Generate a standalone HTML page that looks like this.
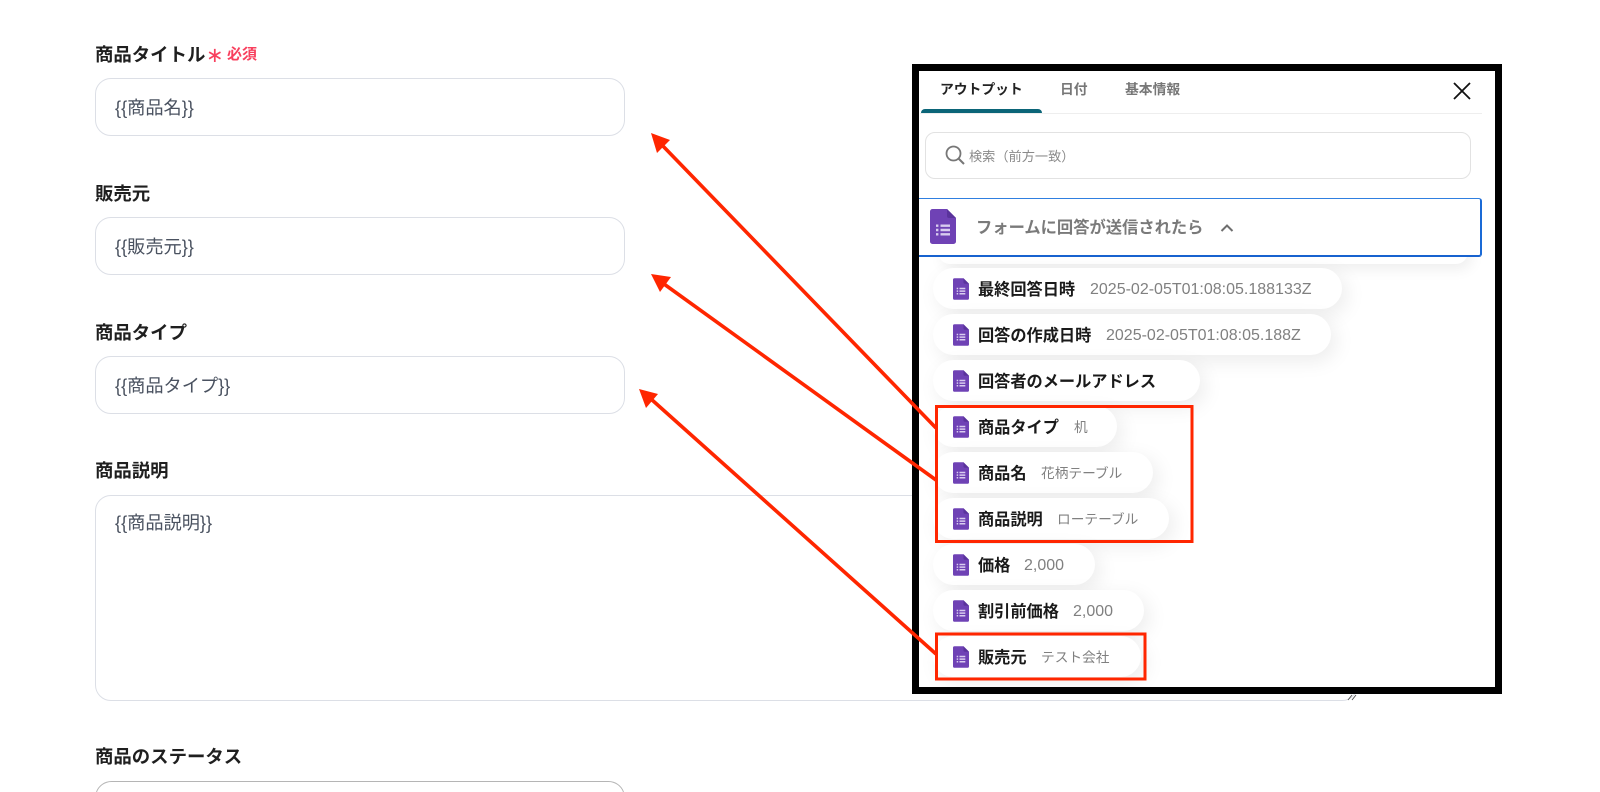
<!DOCTYPE html>
<html lang="ja">
<head>
<meta charset="utf-8">
<title>Form</title>
<style>
html,body{margin:0;padding:0;background:#fff;width:1600px;height:792px;overflow:hidden}
body{position:relative;font-family:"Liberation Sans","Noto Sans CJK JP",sans-serif;color:#1a1a1a}
.a{position:absolute;white-space:nowrap}
.lab{position:absolute;left:95px;font-size:18.4px;font-weight:700;line-height:26px;color:#1f1f1f;white-space:nowrap}
.inp{position:absolute;left:95px;width:530px;box-sizing:border-box;border:1px solid #dcdfe6;border-radius:16px;background:#fff}
.val{position:absolute;left:115px;font-size:18.2px;line-height:24px;color:#4a5260;white-space:nowrap}
.pill{position:absolute;left:933px;height:41px;border-radius:21px;background:#fff;box-shadow:5px 6px 20px rgba(0,0,0,.08)}
.pill svg{position:absolute;left:19.5px;top:9.5px;width:16px;height:22px}
.pill b{position:absolute;left:45px;top:1.500px;line-height:41px;font-size:16.2px;font-weight:700;color:#1a1a1a;white-space:nowrap}
.pill i{position:absolute;top:1px;line-height:41px;font-style:normal;font-size:16px;color:#808080;white-space:nowrap}
.pill i.j{font-size:13.7px}
</style>
</head>
<body>
<svg width="0" height="0" style="position:absolute">
  <defs>
    <symbol id="f" viewBox="0 0 26 35">
      <path d="M2.5 0H17L26 9V32.5A2.5 2.5 0 0 1 23.5 35H2.5A2.5 2.5 0 0 1 0 32.5V2.5A2.5 2.5 0 0 1 2.5 0Z" fill="#6f42b5"/>
      <path d="M17 0L26 9H19A2 2 0 0 1 17 7Z" fill="#5a339c"/>
      <path d="M6 15.5h2.4v2.4H6zM6 19.8h2.4v2.4H6zM6 24.1h2.4v2.4H6zM10.5 15.5H20v2.4h-9.500zM10.500 19.800H20v2.400h-9.500zM10.500 24.100H20v2.400h-9.500z" fill="#d9ccef"/>
    </symbol>
  </defs>
</svg>

<div class="a" style="left:95px;top:41.500px;line-height:26px;font-size:18.4px;font-weight:700;color:#1f1f1f">商品タイトル</div>
<div class="a" style="left:206px;top:44px;line-height:24px;font-size:21px;color:#f8405e">∗</div>
<div class="a" style="left:227px;top:42px;line-height:26px;font-size:15px;font-weight:700;color:#f8405e">必須</div>
<div class="inp" style="top:78px;height:58px"></div>
<div class="val" style="top:96px">{{商品名}}</div>

<div class="lab" style="top:180.500px">販売元</div>
<div class="inp" style="top:217px;height:58px"></div>
<div class="val" style="top:235px">{{販売元}}</div>

<div class="lab" style="top:319.500px">商品タイプ</div>
<div class="inp" style="top:356px;height:58px"></div>
<div class="val" style="top:374px">{{商品タイプ}}</div>

<div class="lab" style="top:458px">商品説明</div>
<div class="inp" style="top:495px;height:206px;width:1263px"></div>
<div class="val" style="top:511px">{{商品説明}}</div>
<svg class="a" style="left:1344px;top:690px" width="16" height="12" viewBox="0 0 16 12"><path d="M4 10L8 5M8 10L12 5" stroke="#555" stroke-width="1" fill="none"/></svg>

<div class="lab" style="top:744px">商品のステータス</div>
<svg class="a" style="left:0;top:770px" width="640" height="22" viewBox="0 770 640 22"><path d="M96.500 792A16 16 0 0 1 111.500 781.500H608.500A16 16 0 0 1 623.500 792" fill="none" stroke="#b5b5b5" stroke-width="1"/></svg>

<!-- panel -->
<div class="a" style="left:912px;top:64px;width:590px;height:630px;box-sizing:border-box;border:7.500px solid #000;background:#fff"></div>
<div class="a" style="left:940px;top:79px;line-height:22px;font-size:13.800px;font-weight:700;color:#222">アウトプット</div>
<div class="a" style="left:1060px;top:79px;line-height:22px;font-size:13.800px;font-weight:700;color:#777">日付</div>
<div class="a" style="left:1125px;top:79px;line-height:22px;font-size:13.800px;font-weight:700;color:#777">基本情報</div>
<div class="a" style="left:920px;top:113px;width:562px;height:1px;background:#eee"></div>
<div class="a" style="left:921px;top:109px;width:121px;height:4px;background:#0b6578;border-radius:4px 4px 0 0"></div>
<svg class="a" style="left:1451px;top:80px" width="22" height="22" viewBox="0 0 22 22"><path d="M3 3L19 19M19 3L3 19" stroke="#111" stroke-width="1.800" fill="none"/></svg>

<div class="a" style="left:925px;top:132px;width:546px;height:47px;box-sizing:border-box;border:1px solid #e2e2e2;border-radius:10px;background:#fff"></div>
<svg class="a" style="left:944px;top:144px" width="22" height="22" viewBox="0 0 22 22"><circle cx="9.500" cy="9.500" r="7" fill="none" stroke="#777" stroke-width="1.800"/><path d="M14.500 14.500L20 20" stroke="#777" stroke-width="2" fill="none"/></svg>
<div class="a" style="left:969px;top:146px;line-height:22px;font-size:13.200px;color:#8a8a8a">検索（前方一致）</div>

<!-- pill hidden behind header -->
<div class="a" style="left:938px;top:240px;width:530px;height:24px;border-radius:14px;background:#fff;box-shadow:4px 5px 14px rgba(0,0,0,.07)"></div>

<div class="pill" style="top:268px;width:409px"><svg><use href="#f"/></svg><b>最終回答日時</b><i style="left:157px">2025-02-05T01:08:05.188133Z</i></div>
<div class="pill" style="top:314px;width:398px"><svg><use href="#f"/></svg><b>回答の作成日時</b><i style="left:173px">2025-02-05T01:08:05.188Z</i></div>
<div class="pill" style="top:360px;width:267px"><svg><use href="#f"/></svg><b>回答者のメールアドレス</b></div>
<div class="pill" style="top:406px;width:184px"><svg><use href="#f"/></svg><b>商品タイプ</b><i class="j" style="left:141px">机</i></div>
<div class="pill" style="top:452px;width:220px"><svg><use href="#f"/></svg><b>商品名</b><i class="j" style="left:108px">花柄テーブル</i></div>
<div class="pill" style="top:498px;width:236px"><svg><use href="#f"/></svg><b>商品説明</b><i class="j" style="left:124px">ローテーブル</i></div>
<div class="pill" style="top:544px;width:162px"><svg><use href="#f"/></svg><b>価格</b><i style="left:91px">2,000</i></div>
<div class="pill" style="top:590px;width:211px"><svg><use href="#f"/></svg><b>割引前価格</b><i style="left:140px">2,000</i></div>
<div class="pill" style="top:636px;width:208px"><svg><use href="#f"/></svg><b>販売元</b><i class="j" style="left:108px">テスト会社</i></div>

<!-- header row -->
<div class="a" style="left:919px;top:198px;width:563px;height:59px;box-sizing:border-box;border:1px solid #2f7fe0;border-left:none;border-right:2px solid #1a6ad6;border-bottom:2.500px solid #1762cf;border-radius:0 3px 3px 0;background:#fff"></div>
<svg class="a" style="left:930px;top:209px" width="26" height="35"><use href="#f"/></svg>
<div class="a" style="left:976px;top:216px;line-height:24px;font-size:16.300px;font-weight:700;color:#7a7a7a">フォームに回答が送信されたら</div>
<svg class="a" style="left:1220px;top:223px" width="14" height="10" viewBox="0 0 14 10"><path d="M1.500 8L7 2.500L12.500 8" fill="none" stroke="#6f6f6f" stroke-width="2"/></svg>

<!-- annotations -->
<svg class="a" style="left:0;top:0" width="1600" height="792" viewBox="0 0 1600 792">
  <g fill="none" stroke="#ff2600" stroke-width="3">
    <rect x="936.500" y="406.500" width="255.500" height="135"/>
    <rect x="936.500" y="634" width="208.500" height="45"/>
  </g>
  <g stroke="#ff2600" stroke-width="3.600" fill="none">
    <path d="M936 428L661 144"/>
    <path d="M936 480L664 284"/>
    <path d="M936 654L651 399"/>
  </g>
  <g fill="#ff2600">
    <polygon points="651,133 670,140 657,153"/>
    <polygon points="651,274 671,277 660,292"/>
    <polygon points="639,389 658,394 646,408"/>
  </g>
</svg>
</body>
</html>
